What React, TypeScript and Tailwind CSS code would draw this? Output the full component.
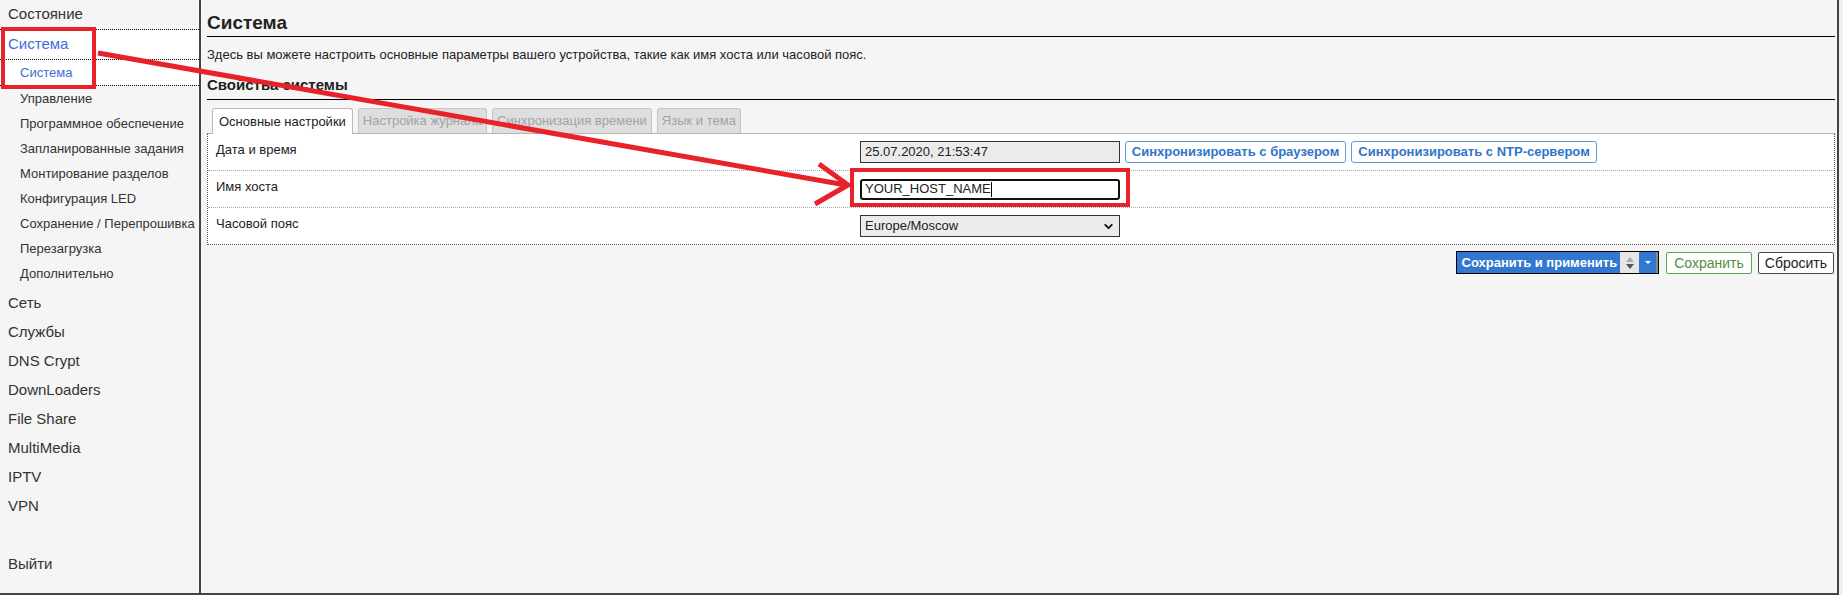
import React from 'react';
import { ChevronDown } from 'lucide-react';

const subItems = [
  'Управление',
  'Программное обеспечение',
  'Запланированные задания',
  'Монтирование разделов',
  'Конфигурация LED',
  'Сохранение / Перепрошивка',
  'Перезагрузка',
  'Дополнительно',
];

const topItems = ['Сеть', 'Службы', 'DNS Crypt', 'DownLoaders', 'File Share', 'MultiMedia', 'IPTV', 'VPN'];

const tabs = ['Настройка журнала', 'Синхронизация времени', 'Язык и тема'];

const Sidebar: React.FC = () => (
  <aside className="w-[201px] shrink-0 border-r-2 border-b-2 border-[#444] bg-[#f5f5f5] text-[#333]">
    <div className="h-[29px] pl-2 flex items-center text-[15px]">Состояние</div>
    <div className="bg-white">
      <div className="h-[30px] pl-2 flex items-center text-[15px] text-[#3d6dd8] border-t border-dotted border-black">
        Система
      </div>
      <div className="h-[27px] pl-5 flex items-center text-[13px] text-[#3d6dd8] border-y border-dotted border-black">
        Система
      </div>
    </div>
    <div className="pb-[3px]">
      {subItems.map((s) => (
        <div key={s} className="h-[25px] pl-5 flex items-center text-[13px]">
          {s}
        </div>
      ))}
    </div>
    {topItems.map((s) => (
      <div key={s} className="h-[29px] pl-2 flex items-center text-[15px]">
        {s}
      </div>
    ))}
    <div className="h-[29px]" />
    <div className="h-[29px] pl-2 flex items-center text-[15px]">Выйти</div>
  </aside>
);

const Row: React.FC<{ label: string; last?: boolean; children: React.ReactNode }> = ({ label, last, children }) => (
  <div
    className={
      last
        ? 'grid grid-cols-[652px_1fr] h-[36px]'
        : 'grid grid-cols-[652px_1fr] h-[37px] border-b border-dotted border-[#aaa]'
    }
  >
    <div className="pl-2 pt-[8px] leading-[16px] text-[13px] text-[#222]">{label}</div>
    <div className="flex items-center">{children}</div>
  </div>
);

const Main: React.FC = () => (
  <main className="flex-1 border-r-2 border-b-2 border-[#444] bg-[#f5f5f5] pl-[6px] pr-[2px] text-[#222]">
    <h2 className="pt-[12px] pb-[2px] leading-[22px] text-[19px] font-bold border-b border-black">Система</h2>
    <p className="mt-[10px] leading-[16px] text-[13px]">
      Здесь вы можете настроить основные параметры вашего устройства, такие как имя хоста или часовой пояс.
    </p>
    <h3 className="mt-[12px] pb-[4px] leading-[20px] text-[15px] font-bold border-b border-black">Свойства системы</h3>

    <div className="mt-[8px] flex gap-[5px] pl-[5px] h-[25px] items-end">
      <div className="h-[26px] relative top-[1px] px-[6px] flex items-center text-[13px] bg-white border border-b-0 border-[#bbb] rounded-t-[3px]">
        Основные настройки
      </div>
      {tabs.map((t) => (
        <div
          key={t}
          className="h-[25px] px-[4px] flex items-center text-[13px] text-[#a3a3a3] bg-[#dedede] border border-b-0 border-[#c6c6c6] rounded-t-[3px]"
        >
          {t}
        </div>
      ))}
    </div>

    <div className="bg-white border-t border-[#b5b5b5] border-x border-b border-x-[#555] border-b-[#555] border-dotted [border-top-style:solid]">
      <Row label="Дата и время">
        <div className="w-[260px] h-[22px] bg-[#ebebeb] border border-[#333] pl-[4px] flex items-center text-[13px]">
          25.07.2020, 21:53:47
        </div>
        <button className="ml-[5px] w-[221px] h-[22px] bg-white border border-[#5f9be0] rounded-[3px] text-[13px] font-bold text-[#3174c8]">
          Синхронизировать с браузером
        </button>
        <button className="ml-[5px] w-[246px] h-[22px] bg-white border border-[#5f9be0] rounded-[3px] text-[13px] font-bold text-[#3174c8]">
          Синхронизировать с NTP-сервером
        </button>
      </Row>
      <Row label="Имя хоста">
        <div className="w-[260px] h-[21px] bg-white border-2 border-[#111] rounded-[3px] pl-[3px] flex items-center text-[13px]">
          YOUR_HOST_NAME
          <span className="inline-block w-px h-[15px] bg-black" />
        </div>
      </Row>
      <Row label="Часовой пояс" last>
        <div className="w-[260px] h-[22px] bg-[#ebebeb] border border-[#333] pl-[4px] pr-[4px] flex items-center justify-between text-[13px]">
          Europe/Moscow
          <ChevronDown size={13} strokeWidth={3.5} className="text-[#111]" />
        </div>
      </Row>
    </div>

    <div className="mt-[6px] flex justify-end items-center pr-[1px]">
      <div className="h-[23px] flex border border-black bg-[#3277d0]">
        <div className="pl-[5px] pr-[3px] flex items-center text-[13px] font-bold text-white">Сохранить и применить</div>
        <div className="w-[19px] bg-[#e6e6e6] flex flex-col items-center justify-center gap-[2px]">
          <span className="block w-0 h-0 border-x-[4px] border-x-transparent border-b-[5px] border-b-[#aaa]" />
          <span className="block w-0 h-0 border-x-[4px] border-x-transparent border-t-[5px] border-t-[#555]" />
        </div>
        <div className="w-[19px] flex items-center justify-center border-r-2 border-[#888]">
          <span className="block w-0 h-0 border-x-[3px] border-x-transparent border-t-[3px] border-t-white" />
        </div>
      </div>
      <button className="ml-[7px] h-[22px] px-[7px] bg-white border border-[#5ca35c] rounded-[2px] text-[14px] text-[#4f8f3f]">
        Сохранить
      </button>
      <button className="ml-[6px] h-[22px] px-[6px] bg-white border border-[#444] rounded-[2px] text-[14px] text-[#222]">
        Сбросить
      </button>
    </div>
  </main>
);

const App: React.FC = () => {
  return (
    <div className="relative w-[1843px] h-[595px] flex bg-[#f0f0f0] font-['Liberation_Sans',Arial,sans-serif] overflow-hidden">
      <Sidebar />
      <Main />
      <div className="w-[4px]" />

      {/* Red annotation overlay */}
      <svg className="absolute inset-0 pointer-events-none" width={1843} height={595}>
        <rect x={3} y={29} width={91} height={58} fill="none" stroke="#e8212a" strokeWidth={4} />
        <rect x={852} y={170} width={276} height={35} fill="none" stroke="#e8212a" strokeWidth={4} />
        <line x1={98} y1={53} x2={846} y2={185} stroke="#e8212a" strokeWidth={5} />
        <polyline points="819,164 848,185 815,204" fill="none" stroke="#e8212a" strokeWidth={5} strokeLinejoin="miter" />
      </svg>
    </div>
  );
};

export default App;
